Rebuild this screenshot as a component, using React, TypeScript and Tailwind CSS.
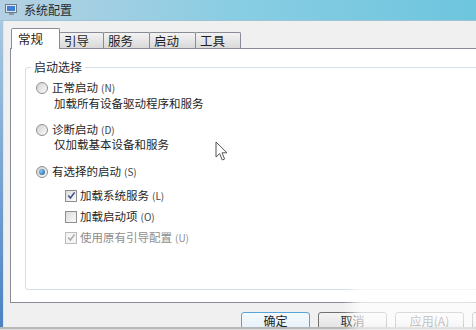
import React from 'react'

const tabs = ['引导', '服务', '启动', '工具']
const tabWidths = ['w-[45px]', 'w-[47px]', 'w-[47px]', 'w-[46px]']

function Radio({ checked }: { checked?: boolean }) {
  return (
    <span className="flex h-[12px] w-[12px] shrink-0 items-center justify-center rounded-full border border-[#8e8f8f] bg-gradient-to-br from-[#d2d2d2] to-[#fbfbfb]">
      {checked && (
        <span className="h-[6px] w-[6px] rounded-full bg-[radial-gradient(circle_at_35%_35%,#86c9f5,#1a5695)]" />
      )}
    </span>
  )
}

function Check({ checked, disabled }: { checked?: boolean; disabled?: boolean }) {
  return (
    <span
      className={`flex h-[12px] w-[12px] shrink-0 items-center justify-center border ${
        disabled
          ? 'border-[#bcbcbc] bg-[#f4f4f4]'
          : 'border-[#8e8f8f] bg-gradient-to-br from-[#dcdcdc] to-[#fafafa]'
      }`}
    >
      {checked && (
        <svg width="9" height="9" viewBox="0 0 9 9">
          <path
            d="M1.3 4.6 L3.4 7 L7.6 1.4"
            fill="none"
            stroke={disabled ? '#a9a9a9' : '#3b4f87'}
            strokeWidth="1.5"
          />
        </svg>
      )}
    </span>
  )
}

function Key({ k }: { k: string }) {
  return <span className="ml-[3px] text-[10px] text-[#444]">({k})</span>
}

export default function App() {
  return (
    <div className="relative h-[330px] w-[476px] overflow-hidden bg-[#f0f0f0] font-['Noto_Sans_CJK_SC',sans-serif] text-[#1f1f1f]">
      {/* Title bar */}
      <div className="flex h-[21px] items-center gap-[6px] border-b border-[#9cc5d6] bg-gradient-to-r from-[#b4d0e2] via-[#88cde3] to-[#6dc5de] pl-[5px]">
        <svg width="13" height="12" viewBox="0 0 13 12">
          <rect x="0.5" y="0.5" width="11" height="8" fill="#dfe6ee" stroke="#6b7a8c" />
          <rect x="2" y="2" width="8" height="5" fill="#3d7fd0" />
          <rect x="4" y="9" width="5" height="2" fill="#8a96a4" />
        </svg>
        <span className="text-[12px] leading-[14px] text-[#2a2a2a]">系统配置</span>
      </div>

      <div className="flex h-[306px]">
        <div className="w-[4px] shrink-0 border-r border-[#dce6ef] bg-gradient-to-b from-[#a8c8e0] to-[#4b82c2]" />
        <div className="flex-1 overflow-hidden pl-[6px] pt-[7px]">
          {/* Tabs */}
          <div className="flex h-[20px] items-end pl-[1px]">
            <div className="relative z-10 -mb-px flex h-[21px] w-[49px] items-center rounded-t-[2px] border border-b-0 border-[#898c95] bg-white pl-[6px] text-[12.5px] leading-[14px]">
              常规
            </div>
            {tabs.map((t, i) => (
              <div
                key={t}
                className={`-ml-px flex h-[16px] ${tabWidths[i]} items-center rounded-t-[2px] border border-b-0 border-[#898c95] bg-gradient-to-b from-[#f3f3f3] to-[#d9d9d9] pl-[4px] text-[12.5px] leading-[14px]`}
              >
                {t}
              </div>
            ))}
          </div>

          {/* Panel */}
          <div className="h-[255px] w-[480px] border border-[#898c95] bg-white pl-[14px] pt-[11px]">
            <fieldset className="h-[230px] w-[460px] rounded-[3px] border border-[#d5dfe5]">
              <legend className="ml-[5px] px-[3px] text-[12px] leading-[14px] text-[#2a2a2a]">启动选择</legend>
              <div className="flex flex-col text-[11.5px] leading-[14px]">
                <div className="mt-[6px] flex items-center gap-[4px] pl-[10px]">
                  <Radio />
                  <span>
                    正常启动<Key k="N" />
                  </span>
                </div>
                <div className="mt-[1px] pl-[28px]">加载所有设备驱动程序和服务</div>

                <div className="mt-[12px] flex items-center gap-[4px] pl-[10px]">
                  <Radio />
                  <span>
                    诊断启动<Key k="D" />
                  </span>
                </div>
                <div className="pl-[28px]">仅加载基本设备和服务</div>

                <div className="mt-[13px] flex items-center gap-[4px] pl-[10px]">
                  <Radio checked />
                  <span>
                    有选择的启动<Key k="S" />
                  </span>
                </div>

                <div className="mt-[9px] flex items-center gap-[3px] pl-[39px]">
                  <Check checked />
                  <span>
                    加载系统服务<Key k="L" />
                  </span>
                </div>
                <div className="mt-[6px] flex items-center gap-[3px] pl-[39px]">
                  <Check />
                  <span>
                    加载启动项<Key k="O" />
                  </span>
                </div>
                <div className="mt-[6px] flex items-center gap-[3px] pl-[39px] text-[#8e8e8e]">
                  <Check checked disabled />
                  <span>
                    使用原有引导配置<span className="ml-[3px] text-[10px]">(U)</span>
                  </span>
                </div>
              </div>
            </fieldset>
          </div>

          {/* Buttons, cut off by the window's lower edge */}
          <div className="mt-[9px] flex gap-[8px] pl-[231px] text-[12px] leading-[14px]">
            <div className="flex h-[22px] w-[69px] shrink-0 justify-center rounded-[3px] border border-[#5aa3d6] bg-gradient-to-b from-[#f4fafd] to-[#e3eff7] pt-[1px]">
              确定
            </div>
            <div className="flex h-[22px] w-[69px] shrink-0 justify-center rounded-[3px] border border-[#707070] bg-gradient-to-b from-[#f4f4f4] to-[#dedede] pt-[1px]">
              取消
            </div>
            <div className="flex h-[22px] w-[69px] shrink-0 justify-center rounded-[3px] border border-[#707070] bg-gradient-to-b from-[#f4f4f4] to-[#dedede] pt-[1px]">
              应用(A)
            </div>
            <div className="flex h-[22px] w-[69px] shrink-0 justify-center rounded-[3px] border border-[#707070] bg-gradient-to-b from-[#f4f4f4] to-[#dedede] pt-[1px]">
              帮助
            </div>
          </div>
        </div>
      </div>
      <div className="h-[2px] bg-[#b8b8b8]" />
      <div className="h-[1px] bg-[#dedede]" />

      {/* watermark haze */}
      <div className="absolute left-[352px] top-[280px] h-[52px] w-[130px] bg-white/75 blur-[6px]" />

      {/* mouse pointer */}
      <svg className="absolute left-[215px] top-[141px]" width="14" height="21" viewBox="0 0 14 21">
        <path
          d="M1 1 L1 16 L4.6 12.6 L7.3 19 L9.6 18 L7 11.8 L12 11.8 Z"
          fill="white"
          stroke="#555"
          strokeWidth="1"
          strokeLinejoin="round"
        />
      </svg>
    </div>
  )
}
